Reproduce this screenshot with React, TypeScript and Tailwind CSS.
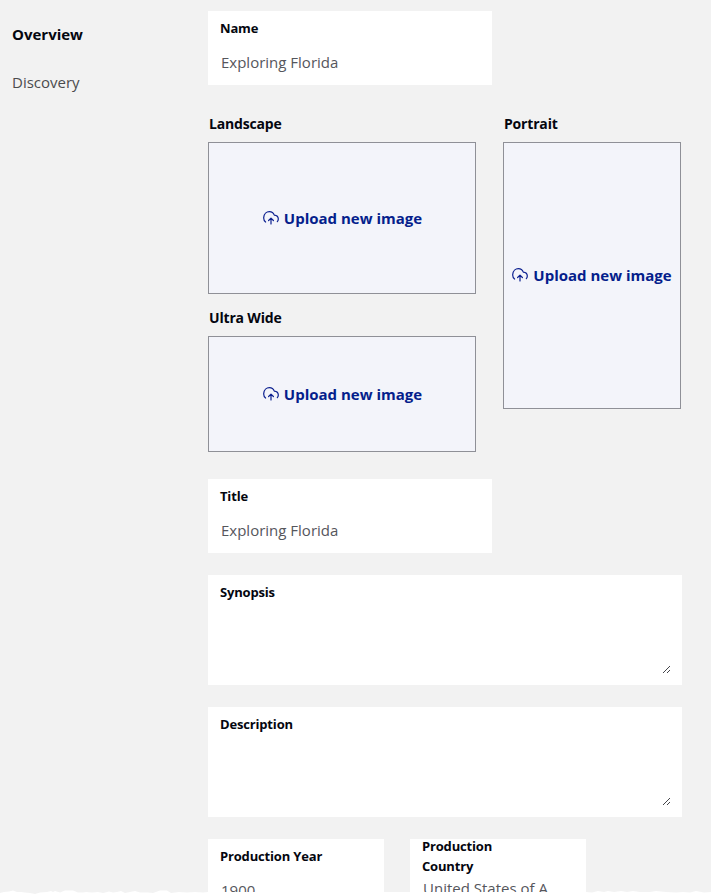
import React from 'react';

function CloudIcon() {
  return (
    <svg className="h-4 w-4 shrink-0" viewBox="0 0 16 16" fill="none" stroke="#0b1f8f" strokeWidth="1.2" strokeLinecap="round" strokeLinejoin="round">
      <path d="M2.600 12C1.200 11 .600 9.400.7 7.600 1 3.800 3.600 1.700 6.400 1.700c2.300 0 4.100 1.300 4.900 3.400 2.200.2 4 1.500 4 3.900 0 1.100-.3 1.900-1 2.600" />
      <path d="M8 14V8.400M5.600 10.500 8 8.100l2.400 2.400" />
    </svg>
  );
}

function Upload({ className }: { className: string }) {
  return (
    <button className={`flex items-center justify-center gap-[5px] border border-[#8f9097] bg-[#f3f4fa] text-[15px] leading-5 font-bold whitespace-nowrap text-[#051e8c] ${className}`}>
      <CloudIcon />
      <span>Upload new image</span>
    </button>
  );
}

function ImageSlot({ label, className }: { label: string; className: string }) {
  return (
    <div className="flex flex-col">
      <span className="mb-2 ml-px text-sm leading-5 font-bold tracking-[-0.18px]">{label}</span>
      <Upload className={className} />
    </div>
  );
}

function Field({ label, value, className }: { label: string; value: string; className: string }) {
  return (
    <div className={`h-[74px] bg-white px-3 pt-[7px] ${className}`}>
      <div className="text-[13px] leading-5 font-bold tracking-[-0.17px]">{label}</div>
      <div className="mt-3.5 ml-px text-[15px] leading-5 text-[#55565c]">{value}</div>
    </div>
  );
}

function Area({ label, className }: { label: string; className: string }) {
  return (
    <div className={`flex h-[110px] w-[474px] flex-col justify-between bg-white pr-[11px] pl-3 pt-[7px] pb-3 ${className}`}>
      <div className="text-[13px] leading-5 font-bold tracking-[-0.17px]">{label}</div>
      <svg className="h-2 w-2 self-end" viewBox="0 0 8 8" stroke="#44454a" strokeWidth="1">
        <path d="M0 8 7 1M4 8 7 5" />
      </svg>
    </div>
  );
}

function TornEdge() {
  return (
    <svg className="absolute bottom-0 left-0 h-1 w-full" viewBox="0 0 711 4" preserveAspectRatio="none" fill="#fff">
      <path d="M0 4V3L4 2 9 1.500 13 .5 17 2 21 2 25 2.500 30 3 35 4 40 2.500 47 2 51 1 53 2 55 1 60 2.500 65 .5 73 .5 78 2.500 83 2.500 86 2 92 2.500 98 2 103 3 109 1.500 113 2.500 117 2 121 1 125 3 130 2 135 1 140 2.500 148 2.500 153 3 160 .5 167 .5 171 3 179 2 187 2.500 195 2 203 2.500 208 2H586L592 2.500 598 1 604 2 608 1 614 2 621 1 627 2 633 1 640 2 650 2 656 1 666 2 676 2.500 683 2 690 2.500 696 1 704 2.500 711 2V4Z" />
    </svg>
  );
}

export default function App() {
  return (
    <div className="relative flex h-[894px] w-[711px] overflow-hidden bg-[#f2f2f2] font-['Open_Sans','Noto_Sans',sans-serif] text-[#04060f]">
      <nav className="w-[208px] shrink-0 pt-6 pl-3 text-[15px] leading-5">
        <div className="font-bold">Overview</div>
        <div className="mt-7 text-[#4b4b4d]">Discovery</div>
      </nav>
      <main className="w-[474px] shrink-0 pt-[11px]">
        <Field label="Name" value="Exploring Florida" className="w-[284px]" />
        <div className="mt-[29px] flex gap-[27px]">
          <div className="flex flex-col gap-3.5">
            <ImageSlot label="Landscape" className="h-[152px] w-[268px] pl-px" />
            <ImageSlot label="Ultra Wide" className="h-[116px] w-[268px] pl-px" />
          </div>
          <ImageSlot label="Portrait" className="h-[267px] w-[178px] pb-px" />
        </div>
        <Field label="Title" value="Exploring Florida" className="mt-[27px] w-[284px]" />
        <Area label="Synopsis" className="mt-[22px]" />
        <Area label="Description" className="mt-[22px]" />
        <div className="mt-[22px] flex gap-[26px]">
          <Field label="Production Year" value="1900" className="w-[176px]" />
          <div className="h-[74px] w-[176px] bg-white px-3">
            <div className="-mt-[3px] w-[90px] text-[13px] leading-5 font-bold tracking-[-0.17px]">Production Country</div>
            <div className="mt-0.5 ml-px text-[15px] leading-5 text-[#55565c]">United States of A</div>
          </div>
        </div>
      </main>
      <TornEdge />
    </div>
  );
}
